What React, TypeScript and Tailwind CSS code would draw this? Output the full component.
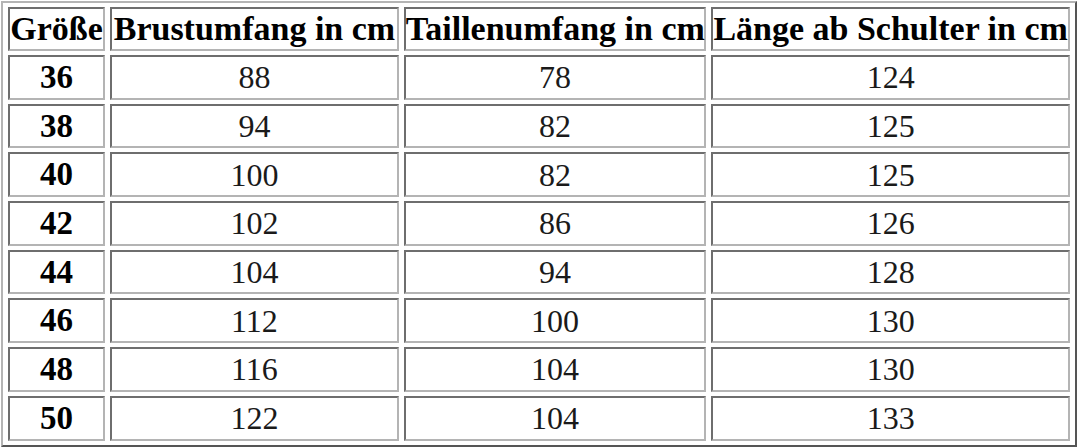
import React from 'react';

const rows: [string, string, string, string][] = [
  ['36', '88', '78', '124'],
  ['38', '94', '82', '125'],
  ['40', '100', '82', '125'],
  ['42', '102', '86', '126'],
  ['44', '104', '94', '128'],
  ['46', '112', '100', '130'],
  ['48', '116', '104', '130'],
  ['50', '122', '104', '133'],
];

const cell =
  'border-2 border-t-[#6e6e6e] border-l-[#6e6e6e] border-b-[#b4b4b4] border-r-[#b4b4b4] p-0 text-center align-middle whitespace-nowrap';

export default function App() {
  return (
    <div className="bg-white w-[1080px] h-[448px] overflow-hidden pt-px pl-px" style={{ fontFamily: '"Liberation Serif", "Times New Roman", serif' }}>
      <table className="border-separate border-spacing-x-[5px] border-spacing-y-[4px] border-2 border-t-[#b4b4b4] border-l-[#b4b4b4] border-b-[#555555] border-r-[#555555] table-fixed w-[1076px] text-black">
        <colgroup>
          <col className="w-[97px]" />
          <col className="w-[288px]" />
          <col className="w-[302px]" />
          <col className="w-[358px]" />
        </colgroup>
        <thead>
          <tr className="h-[44px] text-[34px] font-bold leading-none">
            <th className={cell}>Größe</th>
            <th className={cell}>Brustumfang in cm</th>
            <th className={cell}>Taillenumfang in cm</th>
            <th className={cell}>Länge ab Schulter in cm</th>
          </tr>
        </thead>
        <tbody>
          {rows.map(r => (
            <tr key={r[0]} className="h-[44.7px] text-[32px] leading-none">
              <td className={`${cell} font-bold text-[33px]`}>{r[0]}</td>
              <td className={`${cell} text-[#1a1a1a]`}>{r[1]}</td>
              <td className={`${cell} text-[#1a1a1a]`}>{r[2]}</td>
              <td className={`${cell} text-[#1a1a1a]`}>{r[3]}</td>
            </tr>
          ))}
        </tbody>
      </table>
    </div>
  );
}
